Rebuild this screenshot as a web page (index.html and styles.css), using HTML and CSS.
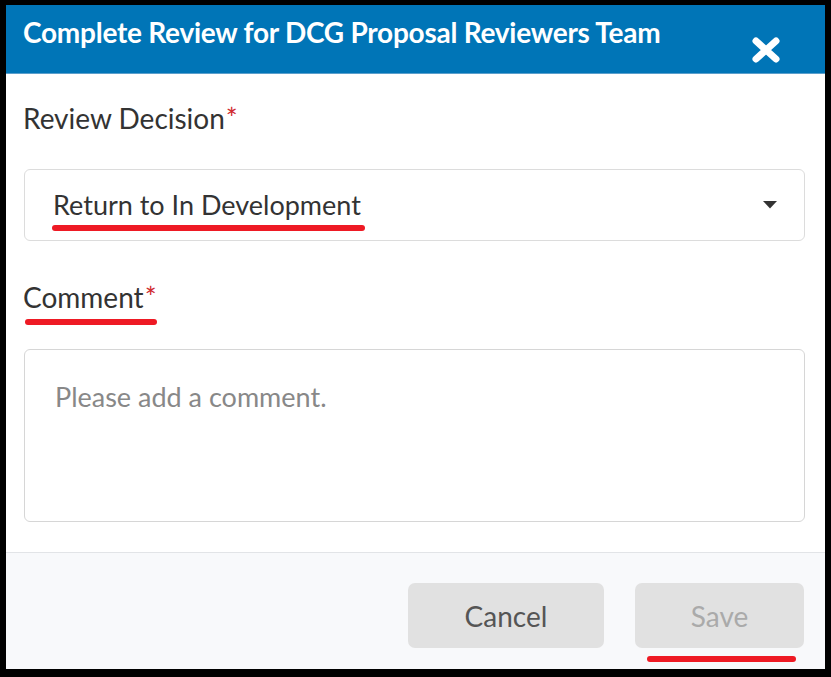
FILE: index.html
```html
<!DOCTYPE html>
<html lang="en">
<head>
<meta charset="utf-8">
<title>Complete Review</title>
<link rel="stylesheet" href="styles.css">
</head>
<body>
<div class="frame">
  <div class="modal">
    <header class="modal-header">
      <h1 class="modal-title">Complete Review for DCG Proposal Reviewers Team</h1>
      <button class="close-btn" aria-label="Close">
        <svg viewBox="0 0 28 26" width="28" height="26">
          <path d="M4 4 L24 22 M24 4 L4 22" stroke="#fff" stroke-width="7" stroke-linecap="round" fill="none"/>
        </svg>
      </button>
    </header>
    <div class="modal-body">
      <label class="field-label">Review Decision<span class="req">*</span></label>
      <div class="select">
        <span class="select-value marked">Return to In Development</span>
        <svg class="caret" viewBox="0 0 14 8" width="14" height="8"><path d="M0 0 H14 L7 7.5 Z" fill="#333"/></svg>
      </div>
      <label class="field-label marked comment-label">Comment<span class="req">*</span></label>
      <div class="textarea">
        <span class="placeholder">Please add a comment.</span>
      </div>
    </div>
    <footer class="modal-footer">
      <button class="btn btn-cancel">Cancel</button>
      <button class="btn btn-save marked">Save</button>
    </footer>
  </div>
</div>
</body>
</html>
```
FILE: styles.css
```css
* { box-sizing: border-box; }
html, body { margin: 0; padding: 0; background: #000; }
body { width: 831px; height: 677px; font-family: Lato, "Open Sans", sans-serif; }
.frame {
  width: 831px;
  height: 677px;
  border-style: solid;
  border-color: #000;
  border-width: 5px 6px 8px 6px;
}
.modal {
  height: 100%;
  background: #fff;
  display: flex;
  flex-direction: column;
}
.modal-header {
  background: #0075b7;
  height: 69px;
  flex: none;
  display: flex;
  align-items: flex-start;
  justify-content: space-between;
  padding: 0 45px 0 17px;
  border-bottom: 1px solid #5b9fcc;
}
.modal-title {
  margin: 0;
  padding-top: 7px;
  color: #fff;
  font-size: 28px;
  font-weight: 700;
  line-height: 40px;
  letter-spacing: -0.25px;
  white-space: nowrap;
}
.close-btn {
  margin-top: 32px;
  padding: 0;
  border: 0;
  background: none;
  width: 28px;
  height: 26px;
  display: block;
  flex: none;
}
.close-btn svg { display: block; }
.modal-body {
  flex: 1;
  padding: 0 20px 0 18px;
}
.field-label {
  display: inline-block;
  position: relative;
  color: #333;
  font-size: 28px;
  line-height: 34px;
  margin: 27px 0 0 -1px;
}
.req { color: #cf2a2e; margin-left: 1px; }
.select {
  margin-top: 34px;
  height: 72px;
  border: 1px solid #dcdcdc;
  border-radius: 6px;
  display: flex;
  align-items: center;
  justify-content: space-between;
  padding: 0 27px 0 28px;
}
.select-value {
  display: inline-block;
  position: relative;
  color: #333;
  font-size: 27px;
  line-height: 34px;
}
.marked::after {
  content: "";
  position: absolute;
  left: -1px;
  right: -4px;
  bottom: -9px;
  height: 6px;
  border-radius: 3px;
  background: #ee1a24;
}
.comment-label { margin-top: 39px; }
.comment-label::after { left: 2px; right: 0; bottom: -11px; }
.textarea {
  margin-top: 35px;
  height: 173px;
  border: 1px solid #d6d6d6;
  border-radius: 6px;
  padding: 30px 30px;
}
.placeholder {
  color: #888;
  font-size: 27px;
  line-height: 34px;
}
.modal-footer {
  flex: none;
  height: 117px;
  background: #f8f9fb;
  border-top: 1px solid #e2e4e7;
  display: flex;
  justify-content: flex-end;
  align-items: flex-start;
  gap: 31px;
  padding: 30px 21px 0 0;
}
.btn {
  position: relative;
  height: 65px;
  border: 0;
  border-radius: 7px;
  background: #e1e1e1;
  font-family: Lato, "Open Sans", sans-serif;
  font-size: 28px;
  padding: 0;
}
.btn-cancel { width: 196px; color: #555; }
.btn-save { width: 169px; color: #aaa; }
.btn-save.marked::after { left: 12px; right: 8px; bottom: -14px; }
```
